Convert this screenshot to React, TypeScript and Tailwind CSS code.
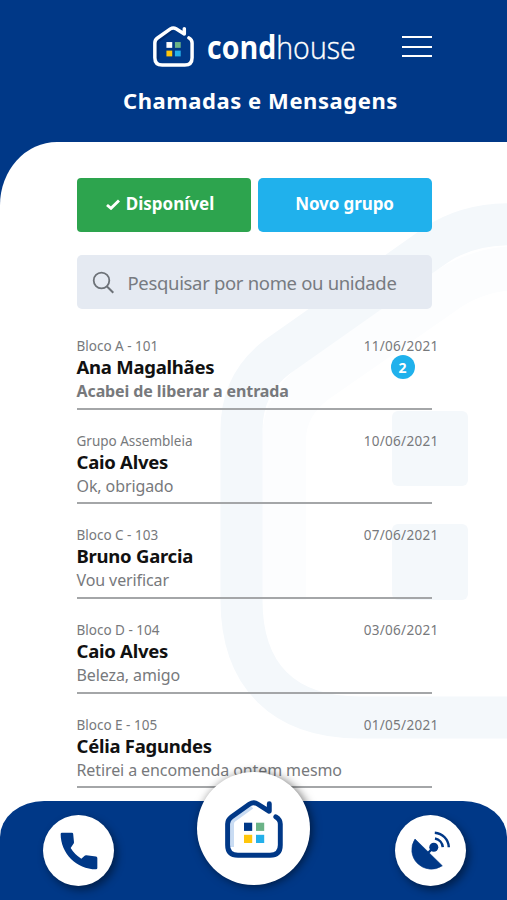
const conversations = [
  { origin: "Bloco A - 101", name: "Ana Magalhães", message: "Acabei de liberar a entrada", date: "11/06/2021", unread: 2 },
  { origin: "Grupo Assembleia", name: "Caio Alves", message: "Ok, obrigado", date: "10/06/2021", unread: 0 },
  { origin: "Bloco C - 103", name: "Bruno Garcia", message: "Vou verificar", date: "07/06/2021", unread: 0 },
  { origin: "Bloco D - 104", name: "Caio Alves", message: "Beleza, amigo", date: "03/06/2021", unread: 0 },
  { origin: "Bloco E - 105", name: "Célia Fagundes", message: "Retirei a encomenda ontem mesmo", date: "01/05/2021", unread: 0 },
]

const HouseIcon = ({ className, stroke, shade, pane }: { className: string; stroke: string; shade: string; pane: string }) => (
  <svg viewBox="0 0 58 58" fill="none" className={className}>
    <path d="M7 47V24Q7 21.500 9 20L27 7" stroke={shade} strokeWidth="4" />
    <path
      d="M44.3 3.7V11.3L32.6 4Q28.6 1.400 24.6 4L6.400 17Q2.600 19.800 2.600 24V45Q2.600 55.300 13 55.300H45Q55.300 55.300 55.300 45V24Q55.300 19.500 50.800 16.800"
      stroke={stroke}
      strokeWidth="4.900"
      strokeLinecap="round"
      strokeLinejoin="round"
    />
    <rect x="19" y="22.7" width="8.2" height="8.2" fill={pane} />
    <rect x="31" y="22.7" width="8.2" height="8.2" fill="#6bb387" />
    <rect x="19" y="34.8" width="8.2" height="8.2" fill="#ffc60b" />
    <rect x="31" y="34.8" width="8.2" height="8.2" fill="#24b0ea" />
  </svg>
)

const PhoneIcon = () => (
  <svg viewBox="0 0 114 114" fill="#003887" className="h-[38px] w-[38px]">
    <path d="M6 2H36Q39 2 39.500 5L42 31Q42 34 40 36L32 48Q44 68 64 80L74 71Q76 69.500 79 70L108 73.500Q112 74 112 78V108Q112 112 108 112C50 112 2 64 2 6Q2 2 6 2Z" />
  </svg>
)

const DishIcon = () => (
  <svg viewBox="0 0 40 40" fill="none" className="h-10 w-10 overflow-visible">
    <path d="M4 8L31.3 34.8A19.500 19.500 0 0 1 4 8Z" fill="#003887" stroke="#003887" strokeWidth="0.6" strokeLinejoin="round" />
    <path d="M17 22L22.8 16.2" stroke="#003887" strokeWidth="2.4" />
    <circle cx="22.8" cy="16.2" r="4.5" fill="#003887" />
    <path d="M24 7.600A9.500 9.500 0 0 1 31.800 16.200M23.800 1.700A15 15 0 0 1 37.800 16.200" stroke="#003887" strokeWidth="2.5" />
  </svg>
)

const Watermark = () => (
  <svg viewBox="0 0 507 900" fill="none" className="absolute inset-0 w-[507px] h-[900px]">
    <path d="M284 600V440Q284 405 315 382L440 295Q475 268 520 268" stroke="#fcfdfe" strokeWidth="44" />
    <path
      d="M520 224.500Q470 222 436 245L277 357Q241.500 384 241.500 430V600C241.500 676 284 717.500 360 717.500H520"
      stroke="#f4f8fb"
      strokeWidth="42"
    />
    <rect x="392" y="411" width="76" height="75" rx="6" fill="#f4f8fb" />
    <rect x="392" y="524" width="76" height="76" rx="6" fill="#f4f8fb" />
  </svg>
)

const App = () => {
  return (
    <div className="relative w-[507px] h-[900px] overflow-hidden bg-[#003887] font-['Noto_Sans',sans-serif]">
      <header className="h-[142px]">
        <div className="relative flex h-[76px] pt-[26px] pl-[153px]">
          <HouseIcon className="w-[41px] h-[41px]" stroke="#ffffff" shade="#002c70" pane="#ffffff" />
          <div className="ml-[13px] mt-[-1px] h-[44px] w-[150px] origin-left scale-x-[0.893] whitespace-nowrap text-[32px] leading-[44px] text-white font-['Open_Sans',sans-serif]">
            <span className="font-bold">cond</span>
            <span className="font-light [-webkit-text-stroke:0.4px_white]">house</span>
          </div>
          <button className="ml-[45px] mt-[10px] flex h-[21px] w-[30px] flex-col justify-between">
            <span className="h-[2px] w-full bg-white" />
            <span className="h-[2px] w-full bg-white" />
            <span className="h-[2px] w-full bg-white" />
          </button>
        </div>
        <h1 className="ml-[123px] mt-[9px] whitespace-nowrap text-[22px] font-bold leading-[31px] tracking-[0.56px] text-white">
          Chamadas e Mensagens
        </h1>
      </header>

      <main className="relative h-[758px] rounded-tl-[57px_63px] bg-white pl-[76.500px] pt-[36px]">
        <div className="absolute -top-[142px] left-0">
          <Watermark />
        </div>
        <div className="relative w-[355px]">
          <div className="flex justify-between">
            <button className="flex h-[54px] w-[174px] items-center justify-center rounded-[4px] bg-[#2da44e] pb-[2px] pr-[7px] text-[17px] font-bold text-white">
              <svg viewBox="0 0 14 11" fill="none" className="mr-[6px] h-[11px] w-[14px]">
                <path d="M1 6L5 9.300L13 1.500" stroke="#fff" strokeWidth="2.900" />
              </svg>
              <span>Disponível</span>
            </button>
            <button className="h-[54px] w-[174px] rounded-[5px] bg-[#20b1ec] pb-[2px] text-[17px] font-bold tracking-[-0.1px] text-white">
              Novo grupo
            </button>
          </div>

          <div className="mt-[23px] flex h-[54px] items-center rounded-[5px] bg-[#e5eaf2]">
            <svg viewBox="0 0 24 24" fill="none" className="ml-[14px] mt-px h-6 w-6">
              <circle cx="10.500" cy="9.500" r="7.800" stroke="#6d7278" strokeWidth="1.800" />
              <path d="M15.500 15L22.300 21.800" stroke="#6d7278" strokeWidth="2" />
            </svg>
            <span className="ml-[13px] whitespace-nowrap pt-px text-[18.500px] tracking-[-0.33px] text-[#777b81]">Pesquisar por nome ou unidade</span>
          </div>

          <ul className="mt-[6px]">
            {conversations.map((item) => (
              <li key={item.date} className="relative h-[94.650px] whitespace-nowrap border-b-2 border-[#a4a6a8] pt-[22px]">
                <div className="-mr-[7px] flex justify-between text-[13.500px] leading-[19px] text-[#77797c]">
                  <span>{item.origin}</span>
                  <span className="tracking-[0.3px]">{item.date}</span>
                </div>
                <p className="text-[18.500px] font-bold leading-[22px] tracking-[-0.25px] text-[#111]">{item.name}</p>
                <p className={`text-[16px] leading-[27px] tracking-[-0.1px] text-[#77797c] ${item.unread ? "font-bold" : ""}`}>{item.message}</p>
                {item.unread > 0 && (
                  <span className="absolute right-[17px] top-[40px] flex h-6 w-6 items-center justify-center rounded-full bg-[#20b1ec] text-[14px] font-bold text-white">
                    {item.unread}
                  </span>
                )}
              </li>
            ))}
          </ul>
        </div>
      </main>

      <nav className="absolute bottom-0 left-0 grid h-[99px] w-full grid-cols-[71px_113px_71px] gap-x-[83px] rounded-t-[44px_36px] bg-[#003887] pl-[43px]">
        <button className="mt-[14px] flex h-[71px] w-[71px] items-center justify-center rounded-full bg-white shadow-[3px_4px_8px_rgba(0,0,0,0.45)]">
          <PhoneIcon />
        </button>
        <button className="-mt-[29px] flex h-[113px] w-[113px] items-center justify-center rounded-full bg-white shadow-[2px_1px_10px_rgba(0,0,0,0.55)]">
          <HouseIcon className="h-[58px] w-[58px]" stroke="#003887" shade="#c9dcf3" pane="#003887" />
        </button>
        <button className="ml-[2px] mt-[14px] flex h-[71px] w-[71px] items-center justify-center rounded-full bg-white shadow-[3px_4px_8px_rgba(0,0,0,0.45)]">
          <DishIcon />
        </button>
      </nav>
    </div>
  )
}

export default App
